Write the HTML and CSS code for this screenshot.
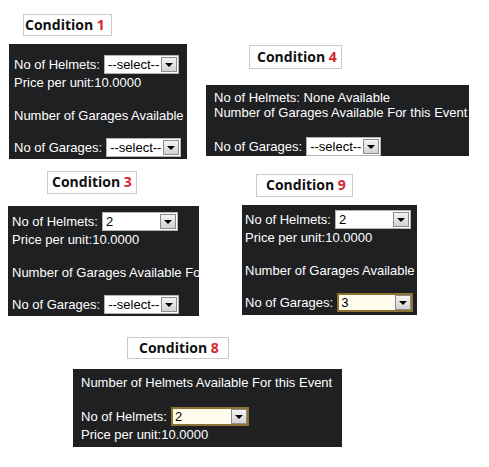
FILE: index.html
```html
<!DOCTYPE html>
<html>
  <head>
    <title>Conditions</title>
    <link rel="stylesheet" href="styles.css">
  </head>
  <body>
    <div class="row">
      <div class="card card-1">
        <div class="tag tag-1">Condition <span class="num">1</span></div>
        <div class="panel panel-1">
          <div class="line-sel">No of Helmets:<span class="sel"><span class="sel-val">--select--</span><span class="sel-btn"></span></span></div>
          <div class="line">Price per unit:10.0000</div>
          <div class="gap-a"></div>
          <div class="line">Number of Garages Available For this Event</div>
          <div class="gap-b"></div>
          <div class="line-sel">No of Garages:<span class="sel"><span class="sel-val">--select--</span><span class="sel-btn"></span></span></div>
        </div>
      </div>
      <div class="card card-4">
        <div class="tag tag-4">Condition <span class="num">4</span></div>
        <div class="panel panel-4">
          <div class="line">No of Helmets: None Available</div>
          <div class="line">Number of Garages Available For this Event</div>
          <div class="gap-c"></div>
          <div class="line-sel">No of Garages:<span class="sel"><span class="sel-val">--select--</span><span class="sel-btn"></span></span></div>
        </div>
      </div>
    </div>

    <div class="row">
      <div class="card card-3">
        <div class="tag tag-3">Condition <span class="num">3</span></div>
        <div class="panel panel-3">
          <div class="line-sel">No of Helmets:<span class="sel sel-wide"><span class="sel-val">2</span><span class="sel-btn"></span></span></div>
          <div class="line">Price per unit:10.0000</div>
          <div class="gap-a"></div>
          <div class="line">Number of Garages Available For this Event</div>
          <div class="gap-b"></div>
          <div class="line-sel">No of Garages:<span class="sel"><span class="sel-val">--select--</span><span class="sel-btn"></span></span></div>
        </div>
      </div>
      <div class="card card-9">
        <div class="tag tag-9">Condition <span class="num">9</span></div>
        <div class="panel panel-9">
          <div class="line-sel">No of Helmets:<span class="sel sel-wide"><span class="sel-val">2</span><span class="sel-btn"></span></span></div>
          <div class="line">Price per unit:10.0000</div>
          <div class="gap-a"></div>
          <div class="line">Number of Garages Available For this Event</div>
          <div class="gap-b"></div>
          <div class="line-sel">No of Garages:<span class="sel sel-wide sel-focus"><span class="sel-val">3</span><span class="sel-btn"></span></span></div>
        </div>
      </div>
    </div>

    <div class="row">
      <div class="card card-8">
        <div class="tag tag-8">Condition <span class="num">8</span></div>
        <div class="panel panel-8">
          <div class="line">Number of Helmets Available For this Event</div>
          <div class="gap-d"></div>
          <div class="line-sel">No of Helmets:<span class="sel sel-long sel-focus"><span class="sel-val">2</span><span class="sel-btn"></span></span></div>
          <div class="line">Price per unit:10.0000</div>
        </div>
      </div>
    </div>
  </body>
</html>
```

FILE: styles.css
```css
body {
  margin: 0;
  background-color: #ffffff;
}
.row {
  display: flex;
  align-items: flex-start;
}
.card {
  display: flex;
  flex-direction: column;
  align-items: flex-start;
}

/* condition labels */
.tag {
  box-sizing: border-box;
  height: 23px;
  border: 1px solid #cbcbcb;
  background-color: #ffffff;
  font-family: 'Open Sans', sans-serif;
  font-weight: 700;
  font-size: 14px;
  line-height: 20px;
  color: #111111;
  white-space: nowrap;
}
.num {
  color: #d3272d;
}

/* dark panels */
.panel {
  box-sizing: border-box;
  overflow: hidden;
  background-color: #1f2022;
  color: #ffffff;
  font-family: 'Liberation Sans', Arial, sans-serif;
  font-size: 13px;
  white-space: nowrap;
}
.line {
  height: 15px;
  line-height: 15px;
}
.line-sel {
  display: flex;
  align-items: center;
  height: 21px;
}
.gap-a { height: 18px; }
.gap-b { height: 14px; }
.gap-c { height: 16px; }
.gap-d { height: 16px; }

/* select boxes */
.sel {
  box-sizing: border-box;
  display: flex;
  width: 75px;
  height: 19px;
  margin-left: 4px;
  padding: 1px;
  border: 1px solid #b4b4b4;
  background-color: #ffffff;
  color: #000000;
}
.sel-wide { width: 76px; }
.sel-long { width: 78px; }
.sel-val {
  flex: 1;
  padding-left: 2px;
  line-height: 15px;
  overflow: hidden;
}
.sel-btn {
  box-sizing: border-box;
  display: flex;
  align-items: center;
  justify-content: center;
  width: 16px;
  border: 1px solid #8c8c8c;
  background: linear-gradient(#f4f4f4, #d2d2d2);
}
.sel-btn::after {
  content: '';
  width: 0;
  height: 0;
  margin-top: 1px;
  border-left: 4px solid transparent;
  border-right: 4px solid transparent;
  border-top: 4px solid #000000;
}
.sel-focus {
  border: 2px solid #8d7233;
  padding: 0;
  background-color: #fffcec;
}

/* placement of each condition */
.card-1 { margin: 14px 0 0 9px; }
.tag-1 { width: 89px; height: 22px; padding-left: 1px; margin-left: 14px; }
.panel-1 { width: 178px; height: 115px; margin-top: 8px; padding: 10px 0 0 5px; }

.card-4 { margin: 45px 0 0 19px; }
.tag-4 { width: 93px; height: 24px; padding-left: 7px; margin-left: 43px; line-height: 21px; }
.panel-4 { width: 263px; height: 71px; margin-top: 16px; padding: 5px 0 0 8px; }

.card-3 { margin: 12px 0 0 8px; }
.tag-3 { width: 90px; padding-left: 4px; margin-left: 39px; }
.panel-3 { width: 191px; height: 110px; margin-top: 12px; padding: 5px 0 0 4px; }

.card-9 { margin: 15px 0 0 43px; }
.tag-9 { width: 97px; padding-left: 9px; margin-left: 14px; }
.panel-9 { width: 175px; height: 110px; margin-top: 8px; padding: 4px 0 0 3px; }

.card-8 { margin: 21px 0 0 73px; }
.tag-8 { width: 102px; height: 22px; padding-left: 11px; margin-left: 54px; }
.panel-8 { width: 269px; height: 78px; margin-top: 10px; padding: 6px 0 0 8px; }
```
